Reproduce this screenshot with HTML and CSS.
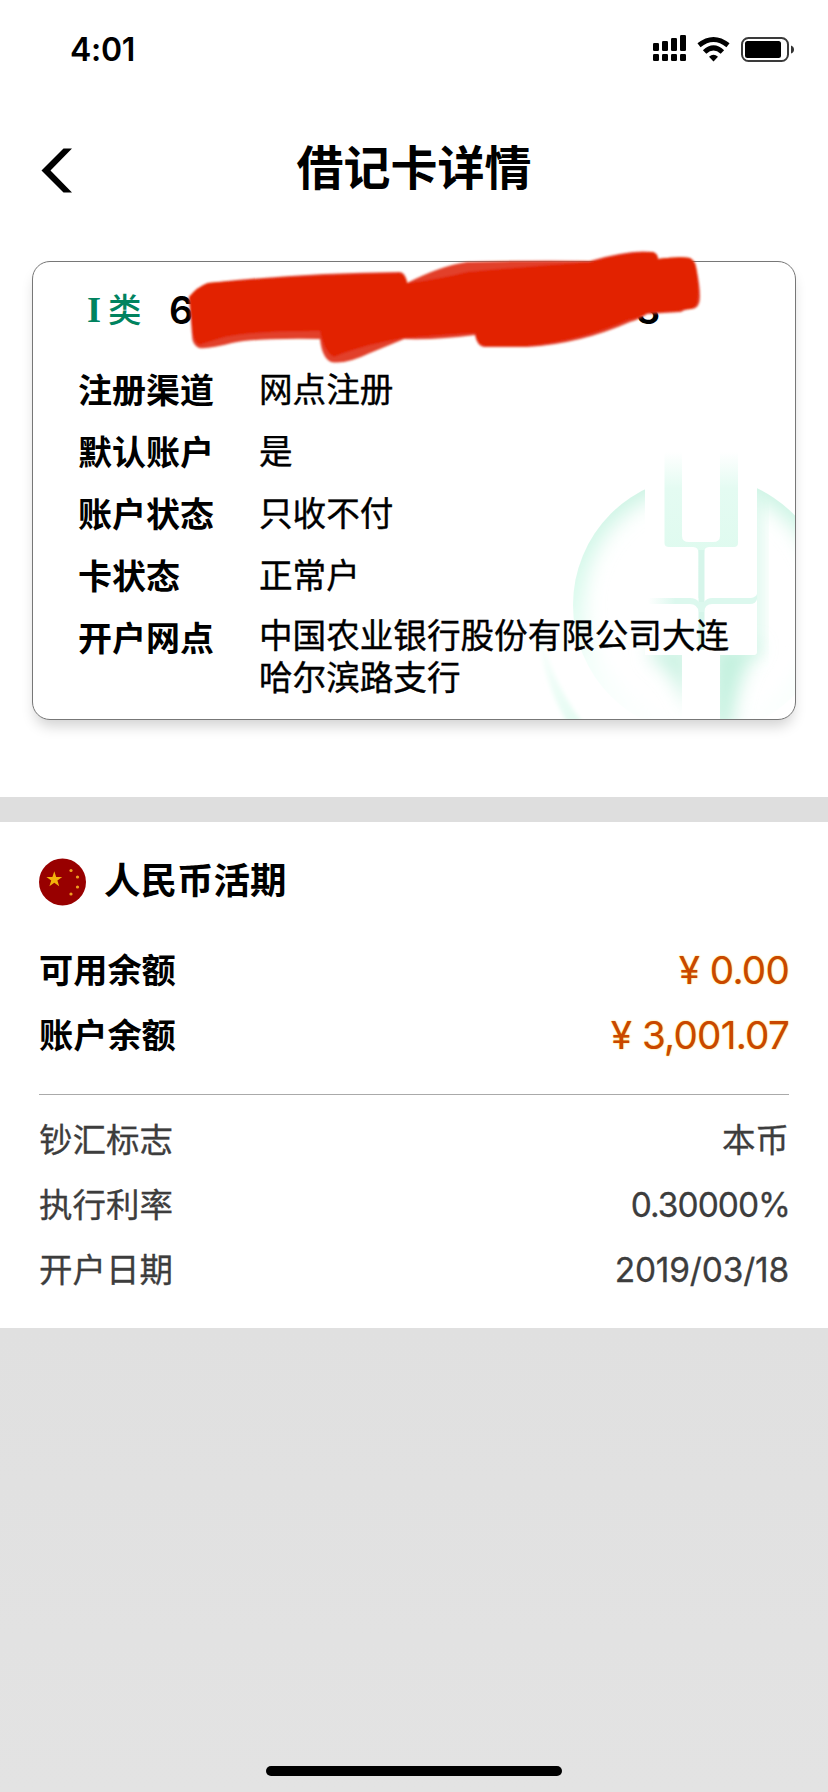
FILE: index.html
```html
<!DOCTYPE html>
<html lang="zh-CN">
<head>
<meta charset="utf-8">
<title>借记卡详情</title>
<link rel="stylesheet" href="styles.css">
</head>
<body>
<div class="screen">
  <div class="status">
    <span class="time">4:01</span>
    <svg class="status-icons" width="142" height="28" viewBox="0 0 142 28">
      <g fill="#000">
        <rect x="0" y="9" width="6" height="8" rx="1.2"/><rect x="9" y="7" width="6" height="10" rx="1.2"/><rect x="18" y="4" width="6" height="13" rx="1.2"/><rect x="27" y="1" width="6" height="16" rx="1.2"/>
        <rect x="0" y="20" width="6" height="7" rx="1.2"/><rect x="9" y="20" width="6" height="7" rx="1.2"/><rect x="18" y="20" width="6" height="7" rx="1.2"/><rect x="27" y="20" width="6" height="7" rx="1.2"/>
        <path d="M56 22.800Q60.500 18.600 65 22.800L60.500 27.400Z"/>
      </g>
      <path d="M46 11.300Q60.500 -.3 75 11.300M51.600 18Q60.500 9.600 69.400 18" fill="none" stroke="#000" stroke-width="5"/>
      <rect x="89" y="4" width="46" height="23" rx="6.500" fill="none" stroke="#3a3a3a" stroke-width="2"/>
      <rect x="92" y="7" width="36" height="17" rx="2.500" fill="#000"/>
      <path d="M138 11.500q3 1 3 4t-3 4z" fill="#333"/>
    </svg>
  </div>

  <div class="navbar">
    <svg class="back" width="32" height="46" viewBox="0 0 32 46"><path d="M22.500 .5H31L9.500 22.500L31 44.500H22.500L.5 22.500Z" fill="#000"/></svg>
    <h1 class="title">借记卡详情</h1>
  </div>

  <div class="card-area">
    <section class="card">
      <svg class="emblem" width="270" height="280" viewBox="525 439 270 280">
        <defs>
          <filter id="soft" x="-20%" y="-20%" width="140%" height="140%"><feGaussianBlur stdDeviation="10"/></filter>
          <filter id="soft2" x="-60%" y="-60%" width="220%" height="220%"><feGaussianBlur stdDeviation="9"/></filter>
          <linearGradient id="down" gradientUnits="userSpaceOnUse" x1="0" y1="480" x2="0" y2="735"><stop offset="0" stop-color="#cbf3e3"/><stop offset=".45" stop-color="#d8faec"/><stop offset=".75" stop-color="#f4fffb"/><stop offset="1" stop-color="#fff"/></linearGradient>
          <linearGradient id="fork" x1="0" y1="0" x2="0" y2="1"><stop offset="0" stop-color="#fff"/><stop offset=".25" stop-color="#e4fbf2"/><stop offset="1" stop-color="#dcfaed"/></linearGradient>
          <linearGradient id="bar" gradientUnits="userSpaceOnUse" x1="648" y1="0" x2="757" y2="0"><stop offset="0" stop-color="#fff"/><stop offset=".25" stop-color="#dcf8ee"/><stop offset="1" stop-color="#dcf8ee"/></linearGradient>
          <linearGradient id="ring" gradientUnits="userSpaceOnUse" x1="0" y1="620" x2="0" y2="720"><stop offset="0" stop-color="#fff"/><stop offset="1" stop-color="#e6fcf3"/></linearGradient>
          <filter id="ringsoft"><feGaussianBlur stdDeviation="2"/></filter>
          <clipPath id="disc"><circle cx="702" cy="605" r="129"/></clipPath>
        </defs>
        <path d="M536 600Q542 672 588 730H572Q536 675 536 600Z" fill="url(#ring)" filter="url(#ringsoft)"/>
        <g clip-path="url(#disc)">
          <circle cx="702" cy="605" r="135" fill="none" stroke="url(#down)" stroke-width="32" filter="url(#soft)"/>
          <path d="M745 490H760V655H745Z" fill="#d0f6e7" filter="url(#soft2)"/>
          <path d="M650 645H690V712Q674 672 650 658Z" fill="#cdf3e4" filter="url(#soft2)"/>
          <path d="M712 645H762Q738 668 731 730H712Z" fill="#c4f1df" filter="url(#soft2)"/>
        </g>
        <path d="M645 440H757V652Q757 655 754 655H720V720H682V655H645Z" fill="#fff"/>
        <path d="M664.500 452H682V536Q682 542 689 542H713Q720 542 720 536V452H738V543Q738 547 734 547H709Q704 547 704 553V598H698.500V553Q698.500 547 693 547H669Q664.500 547 664.500 543Z" fill="url(#fork)"/>
        <path d="M698.500 550H704.500V650H698.500Z" fill="#d6f5ea"/>
        <path d="M648 598H690Q696 598 699 602H704Q707 598 712 598H751Q756 597 757 594V599Q756 604 750 604H712Q705 604 704 612H699Q697 604 690 604H648Z" fill="url(#bar)"/>
      </svg>
      <div class="number-row">
        <span class="kind"><span class="roman">I</span>类</span>
        <span class="digit-first">6</span>
        <span class="digit-last">3</span>
      </div>
      <dl class="facts">
        <dt>注册渠道</dt><dd>网点注册</dd>
        <dt>默认账户</dt><dd>是</dd>
        <dt>账户状态</dt><dd>只收不付</dd>
        <dt>卡状态</dt><dd>正常户</dd>
        <dt>开户网点</dt><dd class="multi">中国农业银行股份有限公司大连<br>哈尔滨路支行</dd>
      </dl>
      <svg class="scribble" width="530" height="130" viewBox="180 245 530 130">
        <defs><filter id="edge"><feGaussianBlur stdDeviation="1.1"/></filter></defs>
        <g filter="url(#edge)">
          <path d="M189 297Q197 287 208 283Q300 273 400 272Q406 273 407 283Q440 266 467 262Q530 260 590 261Q630 249 653 252Q658 254 658 259Q680 256 690 258Q695 261 696 267Q700 285 700 297Q700 308 692 309Q685 309 681 312L647 314Q640 319 630 322Q580 344 527 347H484Q477 346 475 335Q440 340 404 339Q392 344 370 353Q345 365 331 362Q322 358 320 339Q253 338 232 343Q210 349 199 348Q192 345 192 335Z" fill="#e2402a"/>
          <path d="M189 297Q197 287 208 283Q300 275 400 273Q406 276 407 283Q440 279 467 272Q530 266 590 262Q630 251 653 252Q658 254 658 259Q680 256 690 258Q695 261 696 267Q699 285 698 297Q698 308 690 309Q683 309 679 311L647 313Q640 318 628 320Q580 341 527 346H484Q477 344 475 333Q440 335 404 338Q392 340 370 345Q345 352 334 357Q324 352 320 331Q253 331 225 337Q208 342 199 345Q192 340 192 325Z" fill="#e22405"/>
        </g>
      </svg>
    </section>
  </div>

  <section class="account">
    <div class="account-head">
      <svg width="48" height="48" viewBox="0 0 48 48">
        <circle cx="23.500" cy="24" r="23.500" fill="#980000"/>
        <path d="M15.300 13.300L17.200 19H23.200L18.400 22.500L20.200 28.300L15.300 24.800L10.400 28.300L12.200 22.500L7.400 19H13.400Z" fill="#f3b30b"/>
        <g fill="#f0a020"><circle cx="32" cy="12.500" r="1.600"/><circle cx="38.500" cy="19" r="1.600"/><circle cx="38.500" cy="29" r="1.600"/><circle cx="32" cy="36" r="1.600"/></g>
      </svg>
      <h2>人民币活期</h2>
    </div>
    <div class="row strong"><span>可用余额</span><span class="money">¥ 0.00</span></div>
    <div class="row strong"><span>账户余额</span><span class="money">¥ 3,001.07</span></div>
    <div class="minor">
      <div class="row"><span>钞汇标志</span><span>本币</span></div>
      <div class="row"><span>执行利率</span><span class="rate">0.30000%</span></div>
      <div class="row"><span>开户日期</span><span class="date">2019/03/18</span></div>
    </div>
  </section>

  <div class="home"><span class="home-bar"></span></div>
</div>
</body>
</html>
```

FILE: styles.css
```css
* { box-sizing: border-box; margin: 0; padding: 0; }
body { background: #e2e2e2; }

.screen {
  width: 828px;
  height: 1792px;
  display: flex;
  flex-direction: column;
  background: linear-gradient(#dedede 822px, #e0e0e0 1328px, #e3e3e3);
  font-family: Inter, "Noto Sans CJK SC", sans-serif;
  color: #000;
  overflow: hidden;
}

.status {
  height: 100px;
  padding: 0 33px 0 70px;
  display: flex;
  justify-content: space-between;
  align-items: flex-start;
  background: #fff;
}
.time { margin-top: 30px; font-size: 32px; line-height: 40px; font-weight: 600; letter-spacing: -0.3px; }
.status-icons { margin-top: 34px; }

.navbar {
  height: 161px;
  padding: 0 41px;
  display: grid;
  grid-template-columns: 32px 1fr 32px;
  align-items: start;
  background: #fff;
}
.back { margin-top: 48px; }
.title { margin-top: 33px; text-align: center; font-size: 47px; line-height: 70px; font-weight: 700; white-space: nowrap; }

.card-area { flex: none; height: 536px; padding: 0 32px; background: #fff; }
.card {
  position: relative;
  width: 764px;
  height: 459px;
  padding: 23px 45px 0;
  border: 1px solid #777;
  border-radius: 18px;
  background: #fff;
  box-shadow: 0 9px 14px -3px rgba(0, 0, 0, 0.18);
}
.emblem { position: absolute; right: 0; bottom: 0; border-radius: 0 0 17px 0; }
.scribble { position: absolute; left: 147px; top: -17px; }

.number-row {
  position: relative;
  height: 75px;
  display: flex;
  align-items: flex-start;
  line-height: 50px;
  font-size: 38px;
  font-weight: 600;
}
.kind { width: 91px; padding-left: 9px; display: flex; gap: 7px; font-size: 33.5px; font-weight: 500; color: #00835f; }
.roman { font-family: "Liberation Serif", serif; font-weight: 700; font-size: 36px; }
.digit-first { width: 467px; }

.facts {
  position: relative;
  display: grid;
  grid-template-columns: 181px 1fr;
  grid-auto-rows: 62px;
  font-size: 33.6px;
  line-height: 60px;
}
.facts dt { font-weight: 700; font-size: 34px; line-height: 61px; white-space: nowrap; }
.facts dd { white-space: nowrap; -webkit-text-stroke: 0.4px currentColor; }
.facts .multi { line-height: 42px; padding-top: 7px; }

.account { flex: none; height: 506px; margin-top: 25px; padding: 0 39px; background: #fff; }
.account-head { height: 117px; padding-top: 36px; display: flex; gap: 17px; }
.account-head h2 { font-size: 36.5px; line-height: 46px; font-weight: 700; }
.row { height: 65px; display: flex; justify-content: space-between; line-height: 64px; font-size: 33.5px; }
.strong { font-size: 34.2px; font-weight: 700; }
.money {
  font-size: 38.5px;
  font-weight: 400;
  line-height: 62px;
  letter-spacing: -0.7px;
  word-spacing: 0.5px;
  color: #c94700;
  text-shadow: 0 0 1.5px #ffc400;
}
.minor { margin-top: 25px; padding-top: 13px; border-top: 1px solid #aaa; color: #3d3d3d; -webkit-text-stroke: 0.3px currentColor; }
.rate { letter-spacing: -1px; margin-right: -1px; }
.date { letter-spacing: -0.2px; }

.home { flex: 1; display: flex; justify-content: center; align-items: flex-end; padding-bottom: 16px; }
.home-bar { width: 296px; height: 10px; border-radius: 5px; background: #000; }
```
